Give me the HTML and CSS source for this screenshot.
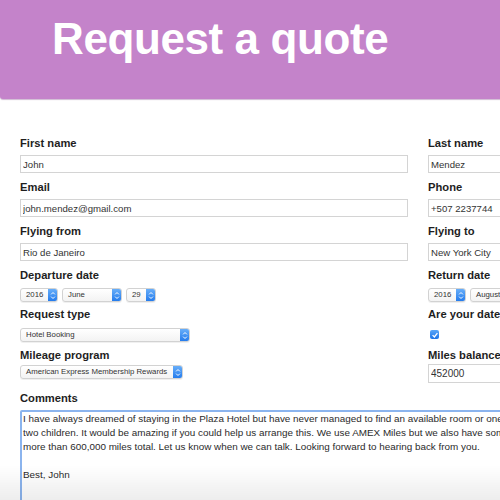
FILE: index.html
```html
<!DOCTYPE html>
<html>
<head>
<meta charset="utf-8">
<link rel="stylesheet" href="styles.css">
</head>
<body>
<header class="hero"><h1 class="hero-title">Request a quote</h1></header>
<form class="form">
  <div class="field"><label class="lbl">First name</label><input class="txt" value="John"></div>
  <div class="field"><label class="lbl">Last name</label><input class="txt" value="Mendez"></div>

  <div class="field"><label class="lbl">Email</label><input class="txt" value="john.mendez@gmail.com"></div>
  <div class="field"><label class="lbl">Phone</label><input class="txt" value="+507 2237744"></div>

  <div class="field"><label class="lbl">Flying from</label><input class="txt" value="Rio de Janeiro"></div>
  <div class="field"><label class="lbl">Flying to</label><input class="txt" value="New York City"></div>

  <div class="field field-date"><label class="lbl">Departure date</label>
    <div class="sel-row">
      <div class="sel w-year"><span class="sel-val">2016</span><span class="sel-btn"><svg viewBox="0 0 8 12" width="6" height="9"><path d="M1.5 4.5 L4 2 L6.5 4.5 M1.5 7.5 L4 10 L6.5 7.5" fill="none" stroke="#fff" stroke-width="1.3"/></svg></span></div>
      <div class="sel w-month"><span class="sel-val">June</span><span class="sel-btn"><svg viewBox="0 0 8 12" width="6" height="9"><path d="M1.5 4.5 L4 2 L6.5 4.5 M1.5 7.5 L4 10 L6.5 7.5" fill="none" stroke="#fff" stroke-width="1.3"/></svg></span></div>
      <div class="sel w-day"><span class="sel-val">29</span><span class="sel-btn"><svg viewBox="0 0 8 12" width="6" height="9"><path d="M1.5 4.5 L4 2 L6.5 4.5 M1.5 7.5 L4 10 L6.5 7.5" fill="none" stroke="#fff" stroke-width="1.3"/></svg></span></div>
    </div>
  </div>
  <div class="field field-date"><label class="lbl">Return date</label>
    <div class="sel-row">
      <div class="sel w-year"><span class="sel-val">2016</span><span class="sel-btn"><svg viewBox="0 0 8 12" width="6" height="9"><path d="M1.5 4.5 L4 2 L6.5 4.5 M1.5 7.5 L4 10 L6.5 7.5" fill="none" stroke="#fff" stroke-width="1.3"/></svg></span></div>
      <div class="sel w-month2"><span class="sel-val">August</span><span class="sel-btn"><svg viewBox="0 0 8 12" width="6" height="9"><path d="M1.5 4.5 L4 2 L6.5 4.5 M1.5 7.5 L4 10 L6.5 7.5" fill="none" stroke="#fff" stroke-width="1.3"/></svg></span></div>
      <div class="sel w-day"><span class="sel-val">15</span><span class="sel-btn"><svg viewBox="0 0 8 12" width="6" height="9"><path d="M1.5 4.5 L4 2 L6.5 4.5 M1.5 7.5 L4 10 L6.5 7.5" fill="none" stroke="#fff" stroke-width="1.3"/></svg></span></div>
    </div>
  </div>

  <div class="field field-type"><label class="lbl">Request type</label>
    <div class="sel w-type"><span class="sel-val">Hotel Booking</span><span class="sel-btn"><svg viewBox="0 0 8 12" width="6" height="9"><path d="M1.5 4.5 L4 2 L6.5 4.5 M1.5 7.5 L4 10 L6.5 7.5" fill="none" stroke="#fff" stroke-width="1.3"/></svg></span></div>
  </div>
  <div class="field field-type"><label class="lbl">Are your dates flexible?</label>
    <span class="chk"><svg viewBox="0 0 10 10" width="8" height="8"><path d="M2 5.2 L4.2 7.4 L8 2.6" fill="none" stroke="#fff" stroke-width="1.6"/></svg></span>
  </div>

  <div class="field field-mile"><label class="lbl">Mileage program</label>
    <div class="sel w-mile"><span class="sel-val">American Express Membership Rewards</span><span class="sel-btn"><svg viewBox="0 0 8 12" width="6" height="9"><path d="M1.5 4.5 L4 2 L6.5 4.5 M1.5 7.5 L4 10 L6.5 7.5" fill="none" stroke="#fff" stroke-width="1.3"/></svg></span></div>
  </div>
  <div class="field field-mile"><label class="lbl">Miles balance</label><input class="txt txt-miles" value="452000"></div>

  <div class="field field-wide"><label class="lbl">Comments</label>
    <textarea class="area">I have always dreamed of staying in the Plaza Hotel but have never managed to find an available room or one that fits my family of four: my wife and our two children. It would be amazing if you could help us arrange this. We use AMEX Miles but we also have some points with other programs, adding up to more than 600,000 miles total. Let us know when we can talk. Looking forward to hearing back from you.

Best, John</textarea>
  </div>
</form>
<div class="fade"></div>
</body>
</html>
```
FILE: styles.css
```css
html, body {
  margin: 0;
  padding: 0;
  overflow: hidden;
  background: #fff;
  font-family: "Liberation Sans", Arial, sans-serif;
}
.hero {
  width: 900px;
  height: 99px;
  background: #c483ca;
  border-bottom-left-radius: 3px;
  box-shadow: 0 1px 1px rgba(120, 60, 130, 0.35);
  padding-left: 52px;
  box-sizing: border-box;
}
.hero-title {
  margin: 0;
  padding-top: 14px;
  font-size: 44px;
  font-weight: bold;
  color: #fff;
  line-height: 50px;
  letter-spacing: -0.4px;
}
.form {
  display: grid;
  grid-template-columns: 388px 388px;
  column-gap: 20px;
  row-gap: 7px;
  padding: 37px 0 0 20px;
  width: 900px;
}
.field {
  display: flex;
  flex-direction: column;
  align-items: flex-start;
  gap: 4px;
}
.lbl {
  font-size: 11.2px;
  font-weight: bold;
  color: #1e1e1e;
  line-height: 15px;
  white-space: nowrap;
}
.txt {
  box-sizing: border-box;
  width: 388px;
  height: 18px;
  margin: 0;
  border: 1px solid #d4d4d4;
  padding: 0 2px;
  font-family: "Liberation Sans", Arial, sans-serif;
  font-size: 9.6px;
  color: #333;
  background: #fff;
}
.field-date { gap: 5px; }
.sel-row {
  display: flex;
  gap: 4px;
}
.sel {
  box-sizing: border-box;
  height: 14px;
  display: flex;
  align-items: stretch;
  border: 1px solid #d2d2d2;
  border-radius: 3px;
  background: linear-gradient(#ffffff, #f3f3f3);
  box-shadow: 0 1px 0 rgba(0,0,0,0.06);
  font-size: 7.8px;
  color: #333;
  overflow: hidden;
}
.sel-val {
  flex: 1;
  padding-left: 5px;
  line-height: 12px;
  white-space: nowrap;
  overflow: hidden;
}
.sel-btn {
  width: 10px;
  display: flex;
  align-items: center;
  justify-content: center;
  background: linear-gradient(#6db2fa, #1f78ec);
  border-radius: 0 2px 2px 0;
  margin: -1px -1px -1px 0;
}
.w-year { width: 38px; }
.w-month { width: 60px; }
.w-month2 { width: 70px; }
.w-day { width: 30px; }
.w-type { width: 170px; }
.w-mile { width: 163px; margin-top: 1px; }
.field-type { gap: 6px; margin-top: -2px; }
.field-mile { gap: 1px; margin-top: -1px; }
.txt-miles { height: 19px; font-size: 10px; }
.chk {
  width: 9px;
  height: 9px;
  margin: 2px 0 0 2px;
  border-radius: 2px;
  background: linear-gradient(#5aa6f8, #1c74e8);
  display: flex;
  align-items: center;
  justify-content: center;
}
.field-wide {
  grid-column: 1 / 3;
  gap: 4px;
  margin-top: 1px;
}
.area {
  box-sizing: border-box;
  width: 672px;
  height: 120px;
  margin: 0;
  border: 2px solid #8bb4ee;
  border-radius: 2px;
  padding: 0 1px;
  font-family: "Liberation Sans", Arial, sans-serif;
  font-size: 9.9px;
  line-height: 14px;
  color: #2a2a2a;
  resize: none;
  outline: none;
}
.fade {
  position: fixed;
  left: 0;
  right: 0;
  bottom: 0;
  height: 35px;
  background: linear-gradient(rgba(0,0,0,0), rgba(0,0,0,0.07));
  pointer-events: none;
}
```
